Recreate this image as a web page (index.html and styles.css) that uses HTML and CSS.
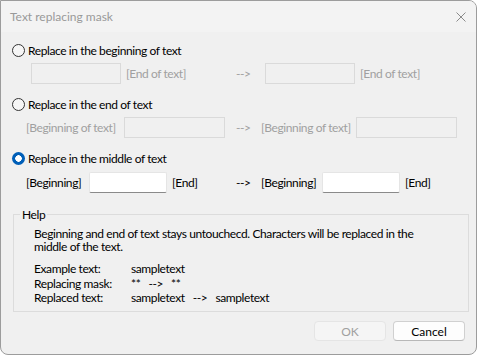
FILE: index.html
```html
<!DOCTYPE html>
<html lang="en">
<head>
    <meta charset="UTF-8">
    <title>Text replacing mask</title>
    <link rel="stylesheet" href="styles.css">
</head>
<body>

<div class="window">
    <!-- Barra de titulo -->
    <div class="titlebar">
        <span class="title">Text replacing mask</span>
        <span class="close">
            <svg width="10" height="10" viewBox="0 0 10 10"><path d="M0.5 0.5 L9.5 9.5 M9.5 0.5 L0.5 9.5" stroke="#8a8a8a" stroke-width="1" fill="none"/></svg>
        </span>
    </div>

    <div class="client">
        <!-- Opcion 1 -->
        <div class="option">
            <span class="radio"></span>
            <span>Replace in the beginning of text</span>
        </div>
        <div class="row disabled row-first">
            <div class="left">
                <span class="box box-90"></span>
                <span>[End of text]</span>
            </div>
            <span class="arrow">--&gt;</span>
            <div class="right right-first">
                <span class="box box-90"></span>
                <span>[End of text]</span>
            </div>
        </div>

        <!-- Opcion 2 -->
        <div class="option">
            <span class="radio"></span>
            <span>Replace in the end of text</span>
        </div>
        <div class="row disabled">
            <div class="left">
                <span class="lbl lbl-long">[Beginning of text]</span>
                <span class="box box-101"></span>
            </div>
            <span class="arrow">--&gt;</span>
            <div class="right">
                <span class="lbl lbl-long2">[Beginning of text]</span>
                <span class="box box-101"></span>
            </div>
        </div>

        <!-- Opcion 3 -->
        <div class="option">
            <span class="radio checked"></span>
            <span>Replace in the middle of text</span>
        </div>
        <div class="row row-last">
            <div class="left">
                <span class="lbl lbl-left">[Beginning]</span>
                <span class="box box-78 active"></span>
                <span>[End]</span>
            </div>
            <span class="arrow">--&gt;</span>
            <div class="right">
                <span class="lbl lbl-right">[Beginning]</span>
                <span class="box box-78 active"></span>
                <span>[End]</span>
            </div>
        </div>

        <!-- Ayuda -->
        <fieldset class="help">
            <legend>Help</legend>
            <div class="help-body">
                <p>Beginning and end of text stays untouchecd. Characters will be replaced in the middle of the text.</p>
                <div class="example">
                    <span>Example text:</span><span>sampletext</span>
                    <span>Replacing mask:</span><span>**&nbsp;&nbsp;&nbsp;--&gt;&nbsp;&nbsp;&nbsp;**</span>
                    <span>Replaced text:</span><span>sampletext&nbsp;&nbsp;&nbsp;--&gt;&nbsp;&nbsp;&nbsp;sampletext</span>
                </div>
            </div>
        </fieldset>

        <div class="buttons">
            <button class="btn" disabled>OK</button>
            <button class="btn">Cancel</button>
        </div>
    </div>
</div>

</body>
</html>
```

FILE: styles.css
```css
body {
    margin: 0;
    background-color: #ffffff;
    font-family: Lato, 'Noto Sans', sans-serif;
    font-size: 12px;
    letter-spacing: -0.4px;
    color: #000000;
    white-space: nowrap;
}

.window {
    width: 475px;
    height: 353px;
    border: 1px solid #9c9c9c;
    border-radius: 0 8px 8px 8px;
    background-color: #f0f0f0;
    overflow: hidden;
}

.titlebar {
    height: 31px;
    background-color: #f3f3f3;
    display: flex;
    align-items: center;
    justify-content: space-between;
    padding: 0 9px 0 9px;
}

.title {
    color: #999999;
    letter-spacing: 0;
}

.close {
    display: flex;
    margin-right: 1px;
}

.client {
    padding: 10px 0 0 11px;
}

.option {
    display: flex;
    align-items: center;
    height: 16px;
    gap: 3px;
}

.radio {
    width: 11px;
    height: 11px;
    border: 1px solid #333333;
    border-radius: 50%;
    background-color: #f6f6f6;
}

.radio.checked {
    width: 13px;
    height: 13px;
    border: none;
    background: radial-gradient(circle, #ffffff 0 3px, #005fb8 3.5px);
}

.row {
    display: flex;
    align-items: center;
    height: 21px;
    margin: 5px 0 12px 14px;
}

.row-first .left {
    padding-left: 5px;
    width: 205px;
}

.row-last {
    margin-top: 6px;
}

.disabled {
    color: #a0a0a0;
}

.left {
    width: 210px;
    display: flex;
    align-items: center;
    gap: 5px;
}

.arrow {
    width: 25px;
}

.right {
    display: flex;
    align-items: center;
    gap: 5px;
}

.right-first {
    padding-left: 4px;
}

.box {
    height: 19px;
    border: 1px solid #dadada;
    background-color: #f0f0f0;
    box-sizing: content-box;
    flex: none;
}

.box-90 { width: 88px; }
.box-101 { width: 99px; }
.box-78 { width: 76px; }

.box.active {
    background-color: #ffffff;
    border-color: #e5e5e5;
    border-bottom-color: #8a8a8a;
    border-radius: 2px;
}

.lbl { flex: none; }
.lbl-long { width: 93px; }
.lbl-long2 { width: 90px; }
.lbl-left { width: 58px; }
.lbl-right { width: 56px; }

.help {
    width: 448px;
    height: 103px;
    margin: 14px 0 0 1px;
    padding: 0 0 0 6px;
    border: 1px solid #dcdcdc;
}

.help legend {
    padding: 0 2px;
}

.help-body {
    padding: 5px 0 0 14px;
}

.help p {
    margin: 0 0 9px 0;
    line-height: 13px;
    width: 384px;
    white-space: normal;
}

.example {
    display: grid;
    grid-template-columns: 97px auto;
    line-height: 14.5px;
}

.buttons {
    display: flex;
    justify-content: flex-end;
    gap: 7px;
    margin: 9px 11px 0 0;
}

.btn {
    width: 72px;
    height: 20px;
    font-family: Lato, 'Noto Sans', sans-serif;
    font-size: 12px;
    border: 1px solid #d0d0d0;
    border-bottom-color: #b8b8b8;
    border-radius: 4px;
    background-color: #fdfdfd;
    color: #000000;
    padding: 0;
}

.btn:disabled {
    background-color: #f5f5f5;
    border-color: #e5e5e5;
    color: #a0a0a0;
}
```
